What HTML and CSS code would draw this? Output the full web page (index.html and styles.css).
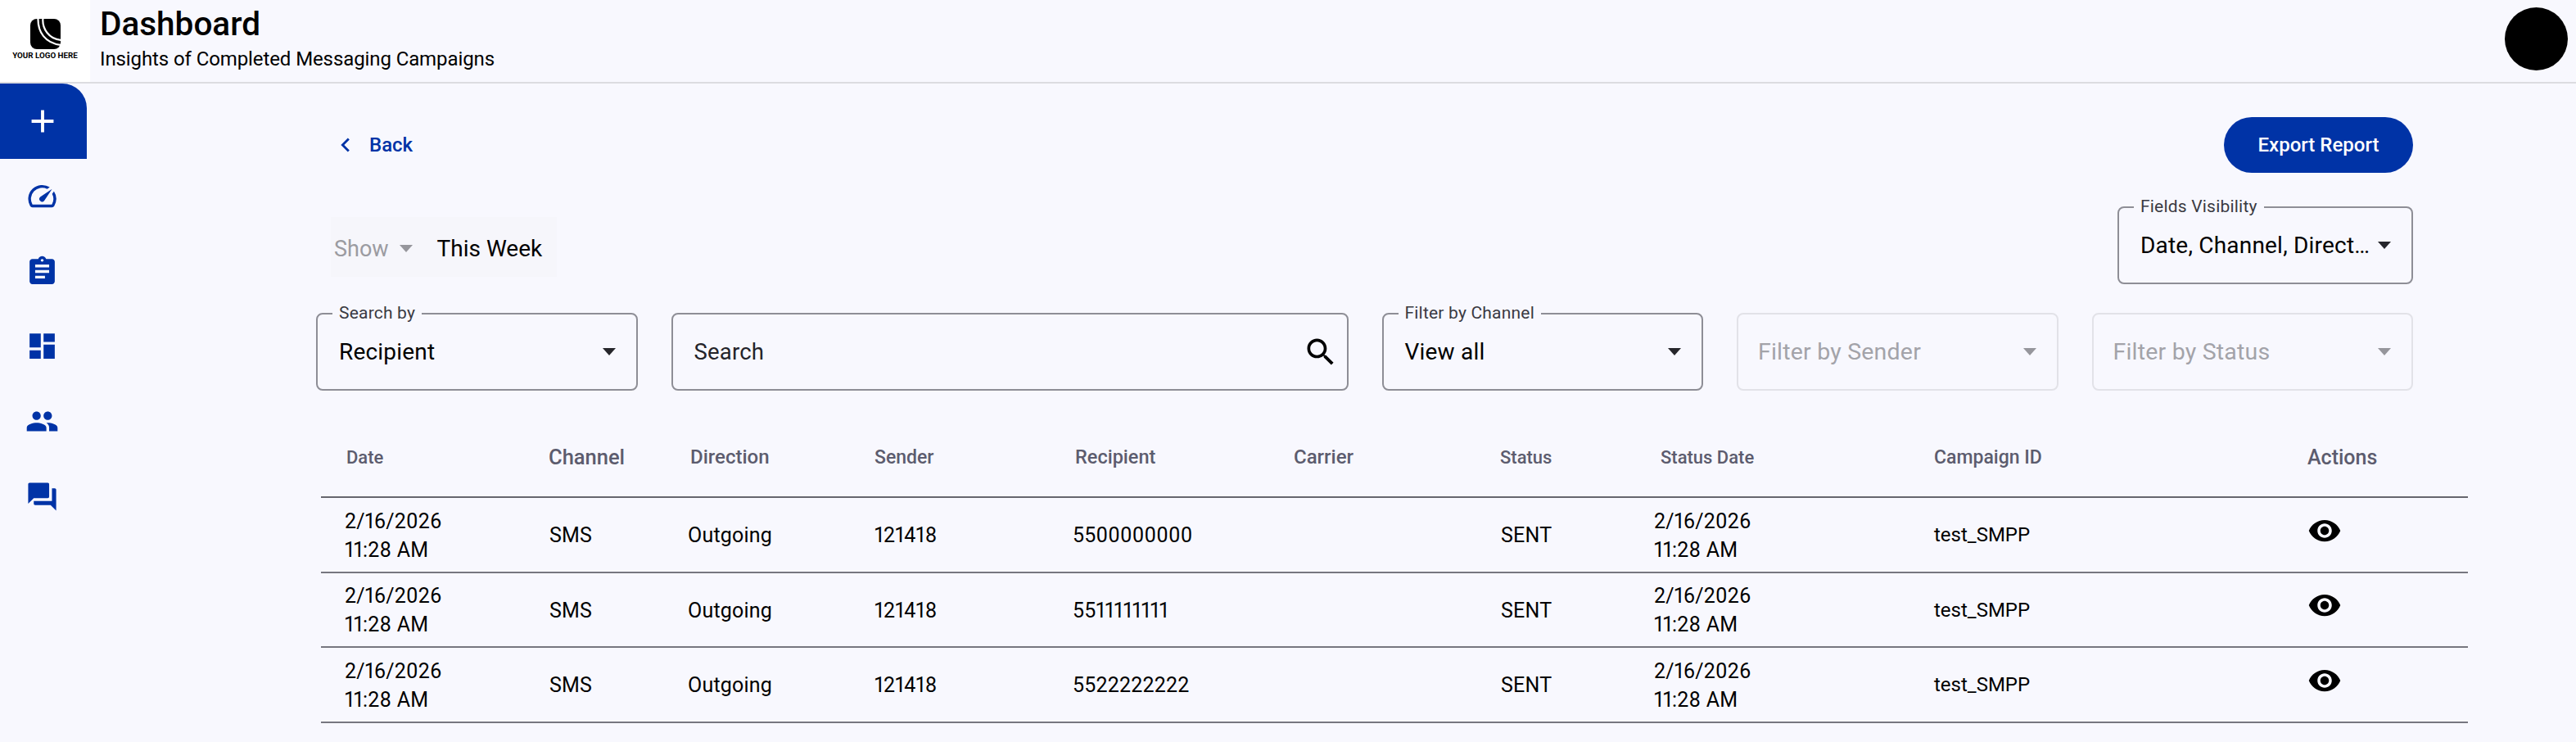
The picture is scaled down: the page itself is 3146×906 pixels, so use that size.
FILE: index.html
```html
<!DOCTYPE html>
<html lang="en">
<head>
<meta charset="utf-8">
<title>Dashboard</title>
<link rel="stylesheet" href="styles.css">
</head>
<body>
<header class="topbar">
  <div class="logo">
    <svg class="logo-mark" viewBox="0 0 37 37"><rect width="37" height="37" rx="8" fill="#000"/><path d="M9.5 -1C9 16 18 30 38 32" fill="none" stroke="#fff" stroke-width="2.2"/><path d="M15.5 -1C14 12 23 25 38 26" fill="none" stroke="#fff" stroke-width="2.2"/></svg>
    <span class="logo-text">YOUR LOGO HERE</span>
  </div>
  <div class="titles">
    <h1 class="title">Dashboard</h1>
    <p class="subtitle">Insights of Completed Messaging Campaigns</p>
  </div>
  <div class="avatar"></div>
</header>
<div class="shell">
  <nav class="sidebar">
    <a class="nav-item nav-active"><svg class="nav-plus" viewBox="0 0 24 24"><path d="M19 13h-6v6h-2v-6H5v-2h6V5h2v6h6v2z"/></svg></a>
    <a class="nav-item"><svg class="nav-icon" viewBox="0 0 24 24"><path d="M20.38 8.57l-1.23 1.85a8 8 0 0 1-.22 7.58H5.07A8 8 0 0 1 15.58 6.85l1.85-1.23A10 10 0 0 0 3.35 19a2 2 0 0 0 1.72 1h13.85a2 2 0 0 0 1.74-1 10 10 0 0 0-.27-10.44zm-9.79 6.84a2 2 0 0 0 2.83 0l5.66-8.49-8.49 5.66a2 2 0 0 0 0 2.83z"/></svg></a>
    <a class="nav-item"><svg class="nav-icon" viewBox="0 0 24 24"><path d="M19 3h-4.18C14.4 1.84 13.3 1 12 1c-1.3 0-2.4.84-2.82 2H5c-1.1 0-2 .9-2 2v14c0 1.1.9 2 2 2h14c1.1 0 2-.9 2-2V5c0-1.1-.9-2-2-2zm-7 0c.55 0 1 .45 1 1s-.45 1-1 1-1-.45-1-1 .45-1 1-1zm2 14H7v-2h7v2zm3-4H7v-2h10v2zm0-4H7V7h10v2z"/></svg></a>
    <a class="nav-item"><svg class="nav-icon" viewBox="0 0 24 24"><path d="M3 13h8V3H3v10zm0 8h8v-6H3v6zm10 0h8V11h-8v10zm0-18v6h8V3h-8z"/></svg></a>
    <a class="nav-item"><svg class="nav-icon" viewBox="0 0 24 24"><path d="M16 11c1.66 0 2.99-1.34 2.99-3S17.66 5 16 5c-1.66 0-3 1.34-3 3s1.34 3 3 3zm-8 0c1.66 0 2.99-1.34 2.99-3S9.66 5 8 5C6.34 5 5 6.34 5 8s1.34 3 3 3zm0 2c-2.33 0-7 1.17-7 3.5V19h14v-2.5c0-2.33-4.67-3.5-7-3.5zm8 0c-.29 0-.62.02-.97.05 1.16.84 1.97 1.97 1.97 3.45V19h6v-2.5c0-2.33-4.67-3.5-7-3.5z"/></svg></a>
    <a class="nav-item"><svg class="nav-icon" viewBox="0 0 24 24"><path d="M21 6h-2v9H6v2c0 .55.45 1 1 1h11l4 4V7c0-.55-.45-1-1-1zm-4 6V3c0-.55-.45-1-1-1H3c-.55 0-1 .45-1 1v14l4-4h10c.55 0 1-.45 1-1z"/></svg></a>
  </nav>
  <main class="main">
    <div class="toolbar">
      <a class="back"><svg class="back-icon" viewBox="0 0 24 24"><path d="M15.41 7.41 14 6l-6 6 6 6 1.41-1.41L10.83 12z"/></svg><span>Back</span></a>
      <button class="export">Export Report</button>
    </div>
    <div class="toolbar range-row">
      <div class="range">
        <span class="range-label">Show</span><i class="caret caret-muted"></i><span class="range-value">This Week</span>
      </div>
      <div class="field field-fields">
        <span class="field-label">Fields Visibility</span>
        <span class="field-value">Date, Channel, Direct…</span><i class="caret"></i>
      </div>
    </div>
    <div class="filters">
      <div class="field field-small">
        <span class="field-label">Search by</span>
        <span class="field-value">Recipient</span><i class="caret"></i>
      </div>
      <div class="field field-search">
        <span class="field-value field-placeholder">Search</span>
        <svg class="search-icon" viewBox="0 0 24 24"><path d="M15.5 14h-.79l-.28-.27C15.41 12.59 16 11.11 16 9.5 16 5.91 13.09 3 9.5 3S3 5.91 3 9.5 5.91 16 9.5 16c1.61 0 3.09-.59 4.23-1.57l.27.28v.79l5 4.99L20.49 19l-4.99-5zm-6 0C7.01 14 5 11.99 5 9.5S7.01 5 9.5 5 14 7.01 14 9.5 11.99 14 9.5 14z"/></svg>
      </div>
      <div class="field field-small">
        <span class="field-label">Filter by Channel</span>
        <span class="field-value">View all</span><i class="caret"></i>
      </div>
      <div class="field field-small field-disabled">
        <span class="field-value">Filter by Sender</span><i class="caret caret-muted"></i>
      </div>
      <div class="field field-small field-disabled">
        <span class="field-value">Filter by Status</span><i class="caret caret-muted"></i>
      </div>
    </div>
    <div class="table">
      <div class="thead">
        <span class="th th-date">Date</span><span class="th th-channel">Channel</span><span class="th th-direction">Direction</span><span class="th th-sender">Sender</span><span class="th th-recipient">Recipient</span><span class="th th-carrier">Carrier</span><span class="th th-status">Status</span><span class="th th-statusdate">Status Date</span><span class="th th-campaign">Campaign ID</span><span class="th th-actions">Actions</span>
      </div>
      <div class="tr">
        <span class="td td-date">2/16/2026<br>11:28 AM</span><span class="td td-channel">SMS</span><span class="td">Outgoing</span><span class="td td-sender">121418</span><span class="td">5500000000</span><span class="td"></span><span class="td td-status">SENT</span><span class="td td-statusdate">2/16/2026<br>11:28 AM</span><span class="td td-campaign">test_SMPP</span><span class="td td-actions"><svg class="eye" viewBox="0 0 24 24"><path d="M12 4.5C7 4.5 2.73 7.61 1 12c1.73 4.39 6 7.5 11 7.5s9.27-3.11 11-7.5c-1.73-4.39-6-7.5-11-7.5zM12 17c-2.76 0-5-2.24-5-5s2.24-5 5-5 5 2.24 5 5-2.24 5-5 5zm0-8c-1.66 0-3 1.34-3 3s1.34 3 3 3 3-1.34 3-3-1.34-3-3-3z"/></svg></span>
      </div>
      <div class="tr">
        <span class="td td-date">2/16/2026<br>11:28 AM</span><span class="td td-channel">SMS</span><span class="td">Outgoing</span><span class="td td-sender">121418</span><span class="td">5511111111</span><span class="td"></span><span class="td td-status">SENT</span><span class="td td-statusdate">2/16/2026<br>11:28 AM</span><span class="td td-campaign">test_SMPP</span><span class="td td-actions"><svg class="eye" viewBox="0 0 24 24"><path d="M12 4.5C7 4.5 2.73 7.61 1 12c1.73 4.39 6 7.5 11 7.5s9.27-3.11 11-7.5c-1.73-4.39-6-7.5-11-7.5zM12 17c-2.76 0-5-2.24-5-5s2.24-5 5-5 5 2.24 5 5-2.24 5-5 5zm0-8c-1.66 0-3 1.34-3 3s1.34 3 3 3 3-1.34 3-3-1.34-3-3-3z"/></svg></span>
      </div>
      <div class="tr">
        <span class="td td-date">2/16/2026<br>11:28 AM</span><span class="td td-channel">SMS</span><span class="td">Outgoing</span><span class="td td-sender">121418</span><span class="td">5522222222</span><span class="td"></span><span class="td td-status">SENT</span><span class="td td-statusdate">2/16/2026<br>11:28 AM</span><span class="td td-campaign">test_SMPP</span><span class="td td-actions"><svg class="eye" viewBox="0 0 24 24"><path d="M12 4.5C7 4.5 2.73 7.61 1 12c1.73 4.39 6 7.5 11 7.5s9.27-3.11 11-7.5c-1.73-4.39-6-7.5-11-7.5zM12 17c-2.76 0-5-2.24-5-5s2.24-5 5-5 5 2.24 5 5-2.24 5-5 5zm0-8c-1.66 0-3 1.34-3 3s1.34 3 3 3 3-1.34 3-3-1.34-3-3-3z"/></svg></span>
      </div>
    </div>
  </main>
</div>
</body>
</html>
```

FILE: styles.css
```css
* { box-sizing: border-box; }
html, body { margin: 0; height: 100%; }
body {
  background: #f8f8fe;
  color: #000;
  font-family: Roboto, "Liberation Sans", sans-serif;
  overflow: hidden;
}

/* top bar */
.topbar {
  display: flex;
  height: 102px;
  border-bottom: 2px solid #dcdce0;
}
.logo {
  width: 110px;
  background: #fff;
  display: flex;
  flex-direction: column;
  align-items: center;
  padding-top: 23px;
}
.logo-mark { width: 37px; height: 37px; display: block; }
.logo-text {
  font-size: 9.8px;
  font-weight: 700;
  line-height: 12px;
  margin-top: 2px;
  white-space: nowrap;
}
.titles { padding: 5px 0 0 12px; flex: 1; }
.title {
  margin: 0;
  font-size: 40.5px;
  line-height: 48px;
  font-weight: 500;
}
.subtitle {
  margin: 5px 0 0;
  font-size: 24px;
  line-height: 28px;
  letter-spacing: -0.1px;
}
.avatar {
  width: 77px;
  height: 77px;
  margin: 9px 10px 0 0;
  border-radius: 50%;
  background: #000;
}

/* side navigation */
.shell { display: flex; }
.sidebar { width: 106px; flex: none; }
.nav-item {
  height: 91.6px;
  padding-right: 3px;
  display: flex;
  align-items: center;
  justify-content: center;
  fill: #0033a6;
}
.nav-active {
  height: 92px;
  background: #0033a6;
  fill: #fff;
  border-top-right-radius: 30px;
}
.nav-plus { width: 46px; height: 46px; }
.nav-icon { width: 41px; height: 41px; }

/* main area */
.main { flex: 1; padding: 41px 132px 0 280px; }
.toolbar {
  display: flex;
  justify-content: space-between;
  align-items: center;
  margin-right: 67px;
}
.back {
  display: flex;
  align-items: center;
  gap: 12px;
  padding-left: 19px;
  color: #0033a6;
  fill: #0033a6;
  font-size: 24px;
  font-weight: 500;
}
.back-icon { width: 34px; height: 34px; }
.export {
  width: 231px;
  height: 68px;
  border: 0;
  border-radius: 34px;
  background: #0033a6;
  color: #fff;
  font: 500 24px Roboto, sans-serif;
}
.range-row { margin-top: 41px; align-items: flex-start; }
.range {
  margin: 13px 0 0 18px;
  width: 276px;
  height: 73px;
  padding: 4px 0 0 4px;
  display: flex;
  align-items: center;
  background: #f6f6fb;
  font-size: 27px;
}
.range-label { color: #9b9ba1; }
.range .caret { margin: 0 30px 0 13px; }
.range-value { font-size: 28px; }

.caret {
  width: 0;
  height: 0;
  flex: none;
  border-left: 8.5px solid transparent;
  border-right: 8.5px solid transparent;
  border-top: 9px solid #26262b;
}
.caret-muted { border-top-color: #96969c; }

.field {
  position: relative;
  height: 95px;
  display: flex;
  align-items: center;
  justify-content: space-between;
  padding: 0 25px 0 26px;
  border: 2px solid #8e8e96;
  border-radius: 8px;
}
.field-fields { width: 361px; }
.field-label {
  position: absolute;
  top: -14px;
  left: 18px;
  padding: 0 8px;
  background: #f8f8fe;
  color: #3a3a42;
  font-size: 21px;
  line-height: 24px;
  letter-spacing: 0.2px;
  white-space: nowrap;
}
.field-value {
  font-size: 28px;
  letter-spacing: 0.2px;
  white-space: nowrap;
}
.field-placeholder { font-size: 27.5px; color: #24242a; }

.filters { display: flex; gap: 41px; margin: 35px 67px 0 0; }
.field-small { width: 392.5px; flex: none; }
.field-search { flex: 1; }
.search-icon { width: 44px; height: 44px; margin-right: -15px; }
.field-disabled { border-color: #e2e2e8; padding-left: 24px; }
.field-disabled .field-value { color: #a3a3a9; font-size: 28.5px; }

/* table */
.table { margin: 33px 0 0 6px; }
.thead, .tr {
  display: grid;
  grid-template-columns: 276px 172px 227px 243px 266px 254px 188px 342px 458px 196px;
  align-items: center;
}
.thead {
  height: 98px;
  border-bottom: 2px solid #66666e;
}
.tr {
  height: 91.5px;
  padding-top: 2px;
  border-bottom: 2px solid #77777f;
}
.th {
  color: #5c5c6e;
  font-size: 22px;
  font-weight: 500;
  white-space: nowrap;
}
.th-date { padding-left: 31px; }
.th-channel { padding-left: 2px; font-size: 25.5px; }
.th-direction { padding-left: 3px; font-size: 24px; }
.th-sender { padding-left: 1px; font-size: 23px; }
.th-recipient { padding-left: 3px; font-size: 23.5px; }
.th-carrier { padding-left: 4px; font-size: 24px; }
.th-status { padding-left: 2px; }
.th-statusdate { padding-left: 10px; }
.th-campaign { padding-left: 2px; font-size: 23px; }
.th-actions { padding-left: 0; font-size: 25px; }

.td {
  font-size: 25px;
  line-height: 35px;
  letter-spacing: 0.2px;
  font-variant-numeric: proportional-nums;
}
.td-date { padding-left: 29px; }
.td-channel { padding-left: 3px; }
.td-sender { padding-left: 1px; }
.td-status { padding-left: 3px; }
.td-statusdate { padding-left: 2px; }
.td-campaign { padding-left: 2px; font-size: 24px; letter-spacing: 0; }
.td-actions { padding: 0 0 12px 0; display: flex; }
.eye { width: 42px; height: 42px; display: block; fill: #000; }
```
